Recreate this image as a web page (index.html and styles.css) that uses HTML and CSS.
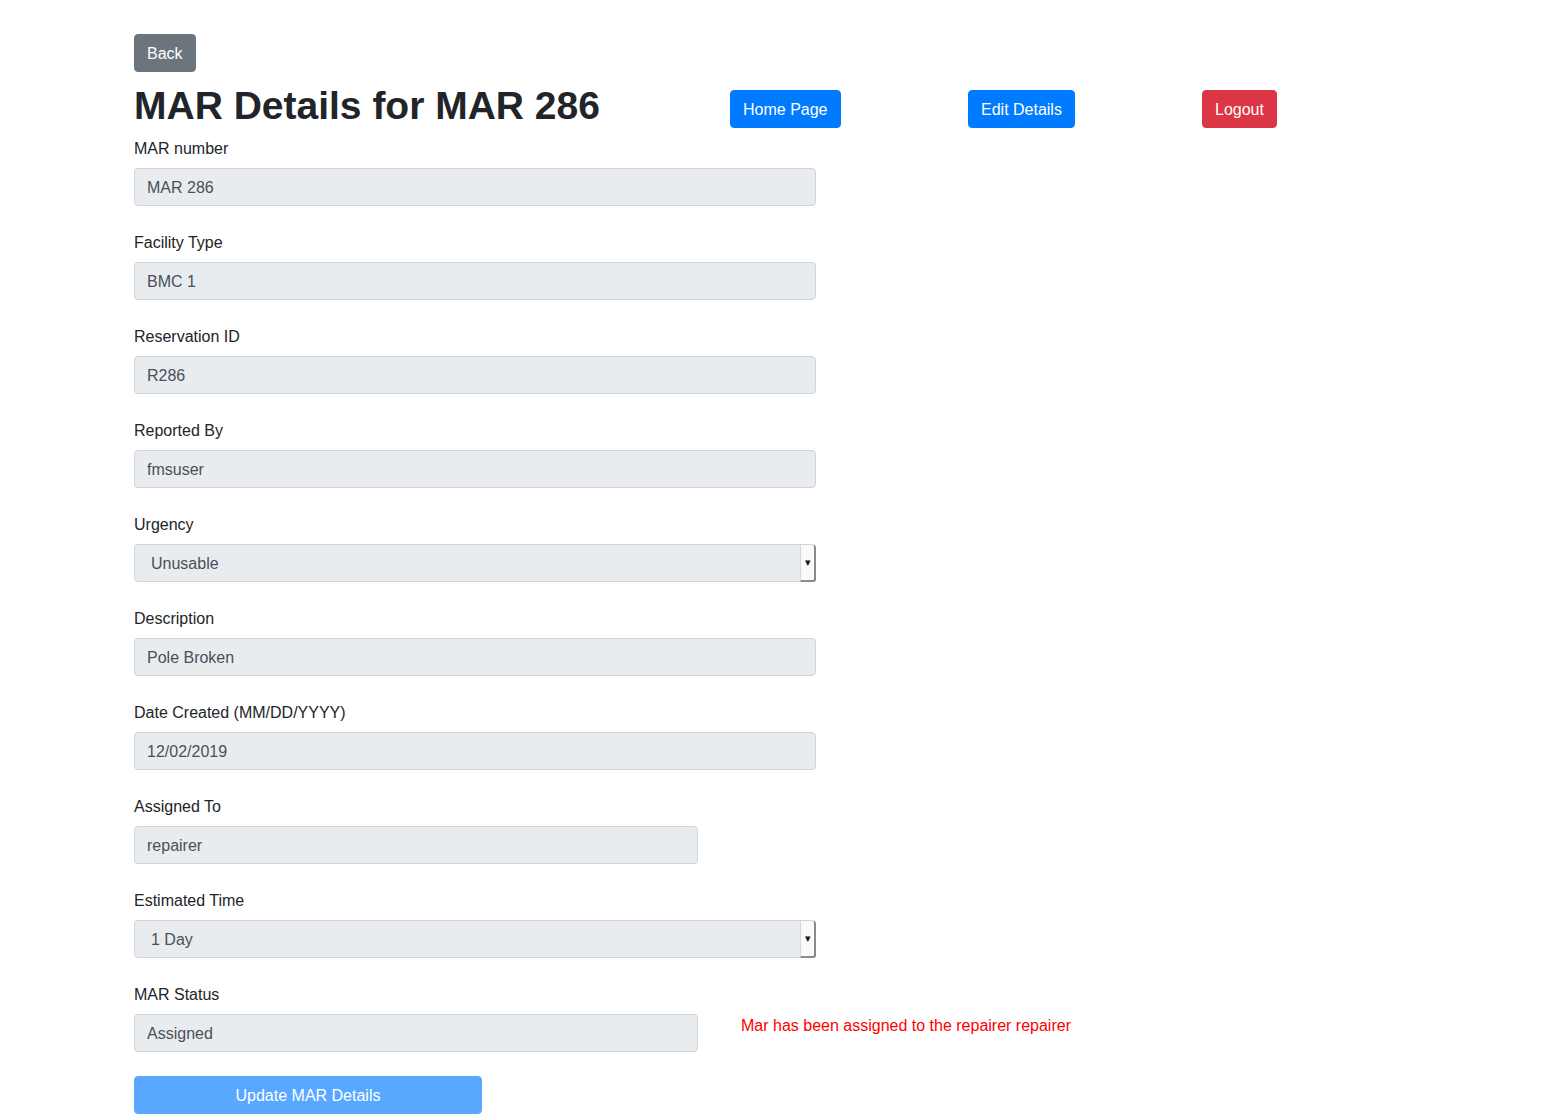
FILE: index.html
```html
<!DOCTYPE html>
<html lang="en">
<head>
<meta charset="utf-8">
<title>MAR Details</title>
<link rel="stylesheet" href="styles.css">
</head>
<body>
<div class="page">
  <button class="btn btn-secondary back">Back</button>
  <div class="title-row">
    <h1>MAR Details for MAR 286</h1>
    <div><button class="btn btn-primary">Home Page</button></div>
    <div><button class="btn btn-primary">Edit Details</button></div>
    <div><button class="btn btn-danger">Logout</button></div>
  </div>
  <form class="form">
    <div class="group">
      <label>MAR number</label>
      <input class="control" type="text" value="MAR 286" readonly>
    </div>
    <div class="group">
      <label>Facility Type</label>
      <input class="control" type="text" value="BMC 1" readonly>
    </div>
    <div class="group">
      <label>Reservation ID</label>
      <input class="control" type="text" value="R286" readonly>
    </div>
    <div class="group">
      <label>Reported By</label>
      <input class="control" type="text" value="fmsuser" readonly>
    </div>
    <div class="group">
      <label>Urgency</label>
      <div class="select-wrap">
        <div class="control select">Unusable</div>
        <span class="arrow">&#9662;</span>
      </div>
    </div>
    <div class="group">
      <label>Description</label>
      <input class="control" type="text" value="Pole Broken" readonly>
    </div>
    <div class="group">
      <label>Date Created (MM/DD/YYYY)</label>
      <input class="control" type="text" value="12/02/2019" readonly>
    </div>
    <div class="group">
      <label>Assigned To</label>
      <input class="control short" type="text" value="repairer" readonly>
    </div>
    <div class="group">
      <label>Estimated Time</label>
      <div class="select-wrap">
        <div class="control select">1 Day</div>
        <span class="arrow">&#9662;</span>
      </div>
    </div>
    <div class="group">
      <label>MAR Status</label>
      <div class="status-row">
        <input class="control short" type="text" value="Assigned" readonly>
        <p class="msg">Mar has been assigned to the repairer repairer</p>
      </div>
    </div>
    <button type="button" class="btn update">Update MAR Details</button>
  </form>
</div>
</body>
</html>
```
FILE: styles.css
```css
html, body {
  margin: 0;
  padding: 0;
  background: #fff;
}
body {
  font-family: "Liberation Sans", Arial, Helvetica, sans-serif;
  font-size: 16px;
  line-height: 24px;
  color: #212529;
}
.page {
  padding: 34px 0 0 134px;
}
.btn {
  font-family: inherit;
  font-size: 16px;
  line-height: 24px;
  padding: 7px 12px;
  border: 1px solid transparent;
  border-radius: 4px;
  color: #fff;
  cursor: pointer;
  display: inline-block;
}
.btn-secondary {
  background: #6c757d;
  border-color: #6c757d;
}
.btn-primary {
  background: #007bff;
  border-color: #007bff;
}
.btn-danger {
  background: #dc3545;
  border-color: #dc3545;
}
.back {
  display: block;
  height: 38px;
  margin-bottom: 10px;
}
.title-row {
  display: grid;
  grid-template-columns: 596px 238px 234px auto;
  align-items: start;
}
.title-row .btn {
  margin-top: 8px;
  height: 38px;
}
h1 {
  margin: 0 0 6px;
  font-size: 39px;
  line-height: 48px;
  font-weight: 700;
  color: #212529;
  white-space: nowrap;
}
.form {
  display: flex;
  flex-direction: column;
  gap: 24px;
  align-items: flex-start;
}
.group {
  display: flex;
  flex-direction: column;
}
.group label {
  display: block;
  padding-top: 1px;
  margin-bottom: 7px;
}
.control {
  box-sizing: border-box;
  width: 682px;
  height: 38px;
  padding: 7px 12px 5px;
  font-family: inherit;
  font-size: 16px;
  line-height: 24px;
  color: #495057;
  background: #e9ecef;
  border: 1px solid #ced4da;
  border-radius: 4px;
  margin: 0;
  outline: none;
}
.control.short {
  width: 564px;
}
.select-wrap {
  position: relative;
  width: 682px;
}
.select {
  padding-left: 16px;
}
.arrow {
  position: absolute;
  right: 0;
  top: 1px;
  width: 13px;
  height: 35px;
  background: #fafafa;
  border-left: 1px solid #d6d6d6;
  border-right: 2px solid #8a8a8a;
  border-bottom: 2px solid #8a8a8a;
  border-radius: 0 3px 3px 0;
  font-size: 11px;
  line-height: 35px;
  text-align: center;
  color: #111;
}
.status-row {
  display: flex;
  align-items: flex-start;
  gap: 43px;
}
.msg {
  margin: 0;
  padding-top: 1px;
  color: #ff0000;
  font-size: 16px;
  line-height: 22px;
}
.update {
  width: 348px;
  height: 38px;
  background: #007bff;
  border-color: #007bff;
  opacity: 0.65;
  text-align: center;
}
```
